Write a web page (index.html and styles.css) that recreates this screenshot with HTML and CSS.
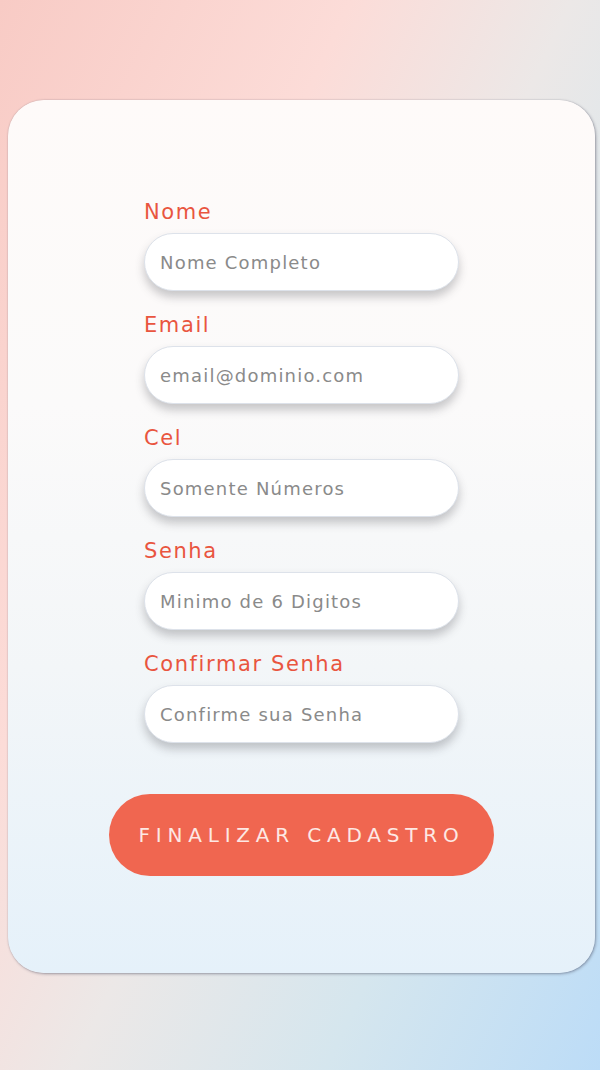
FILE: index.html
```html
<!DOCTYPE html>
<html lang="pt-BR">
<head>
<meta charset="utf-8">
<title>Cadastro</title>
<link rel="stylesheet" href="styles.css">
</head>
<body>
<main class="page">
  <form class="card">
    <div class="fields">
      <label class="field">
        <span class="field-label">Nome</span>
        <input class="field-input" type="text" placeholder="Nome Completo">
      </label>
      <label class="field">
        <span class="field-label">Email</span>
        <input class="field-input" type="email" placeholder="email@dominio.com">
      </label>
      <label class="field">
        <span class="field-label">Cel</span>
        <input class="field-input" type="tel" placeholder="Somente Números">
      </label>
      <label class="field">
        <span class="field-label">Senha</span>
        <input class="field-input" type="password" placeholder="Minimo de 6 Digitos">
      </label>
      <label class="field">
        <span class="field-label">Confirmar Senha</span>
        <input class="field-input" type="password" placeholder="Confirme sua Senha">
      </label>
    </div>
    <button class="submit" type="button">FINALIZAR CADASTRO</button>
  </form>
</main>
</body>
</html>
```
FILE: styles.css
```css
* { box-sizing: border-box; }
html, body { margin: 0; padding: 0; }
body {
  width: 600px;
  height: 1070px;
  overflow: hidden;
  font-family: "DejaVu Sans", "Open Sans", sans-serif;
  background: linear-gradient(115deg, #f8cbc5 0%, #fcdcd8 32%, #ece8e7 52%, #d5e6ee 75%, #bcdcf7 100%);
}
.page {
  padding: 100px 5px 0 8px;
}
.card {
  height: 873px;
  border-radius: 36px;
  background: linear-gradient(180deg, #fefaf9 0%, #fbfafa 35%, #f3f6f8 65%, #e5f1fa 100%);
  box-shadow: 1px 1px 3px rgba(60, 60, 80, 0.45), 0 0 1px rgba(60, 60, 80, 0.4);
  display: flex;
  flex-direction: column;
  align-items: center;
  padding-top: 99px;
}
.fields {
  width: 315px;
  display: flex;
  flex-direction: column;
  gap: 21px;
}
.field {
  display: flex;
  flex-direction: column;
  gap: 8px;
}
.field-label {
  color: #e9553f;
  font-size: 21px;
  line-height: 26px;
  letter-spacing: 1.6px;
}
.field-input {
  width: 315px;
  height: 58px;
  border-radius: 29px;
  border: 1px solid #dde2ea;
  background: #ffffff;
  padding: 0 15px;
  font-family: inherit;
  font-size: 18px;
  letter-spacing: 1.2px;
  color: #555;
  box-shadow: 0 6px 10px rgba(60, 60, 70, 0.28);
  outline: none;
}
.field-input::placeholder {
  color: #8a8a8a;
}
.submit {
  margin-top: 51px;
  width: 385px;
  height: 82px;
  border-radius: 41px;
  border: none;
  background: #f06650;
  color: #fde8e4;
  font-family: inherit;
  font-size: 20px;
  letter-spacing: 5.8px;
  padding: 0;
}
```
